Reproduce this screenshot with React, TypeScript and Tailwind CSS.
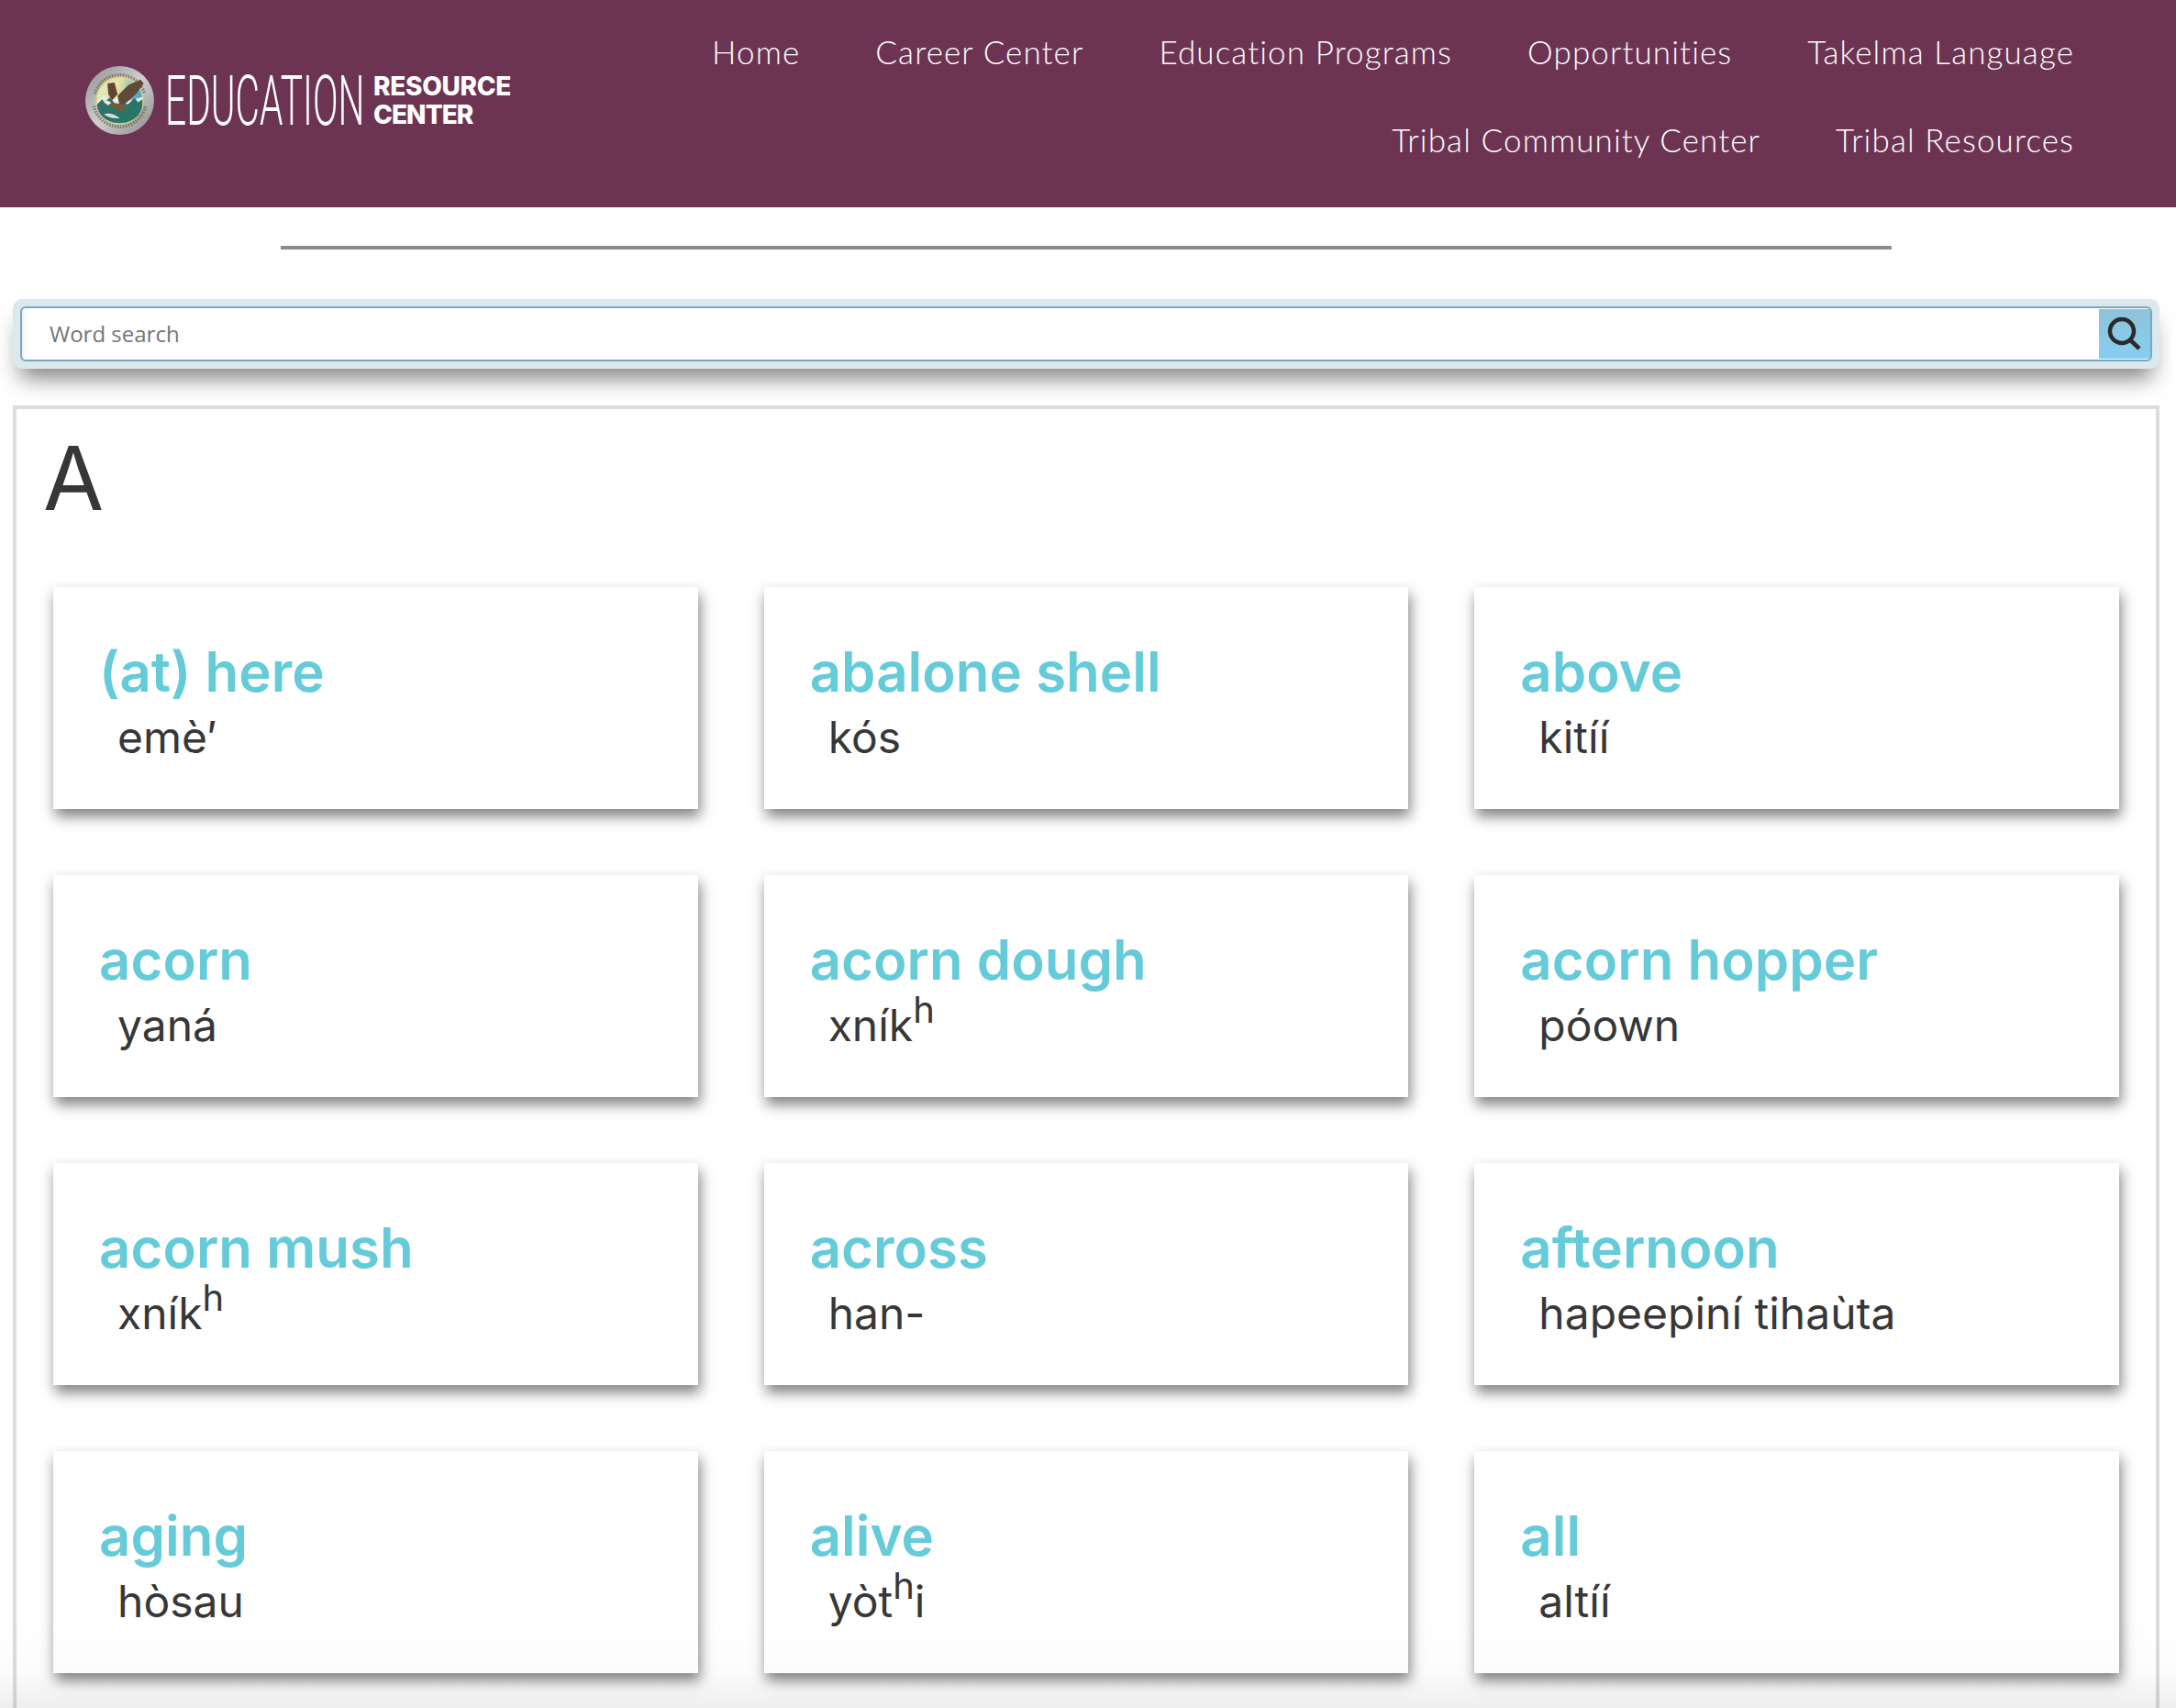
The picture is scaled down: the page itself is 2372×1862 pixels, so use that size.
import React from 'react';

const navItems = [
  'Home',
  'Career Center',
  'Education Programs',
  'Opportunities',
  'Takelma Language',
  'Tribal Community Center',
  'Tribal Resources',
];

type Word = { title: string; word: React.ReactNode };

const words: Word[] = [
  { title: '(at) here', word: 'emè′' },
  { title: 'abalone shell', word: 'kós' },
  { title: 'above', word: 'kitíí' },
  { title: 'acorn', word: 'yaná' },
  { title: 'acorn dough', word: <>xník<sup>h</sup></> },
  { title: 'acorn hopper', word: 'póown' },
  { title: 'acorn mush', word: <>xník<sup>h</sup></> },
  { title: 'across', word: 'han-' },
  { title: 'afternoon', word: 'hapeepiní tihaùta' },
  { title: 'aging', word: 'hòsau' },
  { title: 'alive', word: <>yòt<sup>h</sup>i</> },
  { title: 'all', word: 'altíí' },
];

const Seal = () => (
  <svg width="75" height="75" viewBox="0 0 224 224" className="shrink-0">
    <defs>
      <linearGradient id="ring" x1="0" y1="0" x2="1" y2="1">
        <stop offset="0" stopColor="#8f8f8f" />
        <stop offset="0.5" stopColor="#cfcfcf" />
        <stop offset="1" stopColor="#8a8a8a" />
      </linearGradient>
      <linearGradient id="sky" x1="0" y1="0" x2="1" y2="0.3">
        <stop offset="0" stopColor="#e4e8c8" />
        <stop offset="0.5" stopColor="#e6e2a0" />
        <stop offset="1" stopColor="#3f9fd8" />
      </linearGradient>
    </defs>
    <circle cx="112" cy="112" r="112" fill="url(#ring)" />
    {/* lettering of the ring, too small to read at this size */}
    <path d="M32 90 A83 83 0 0 1 192 90" fill="none" stroke="#5f5a40" strokeWidth="11" strokeDasharray="5 4" opacity="0.65" />
    <path d="M28 130 A86 86 0 0 0 196 130" fill="none" stroke="#5f5a40" strokeWidth="11" strokeDasharray="5 4" opacity="0.65" />
    <circle cx="112" cy="112" r="76" fill="url(#sky)" stroke="#d9d08a" strokeWidth="5" />
    <path d="M38 118 L60 96 L84 112 L112 92 L150 112 L186 100 L186 130 L38 130 Z" fill="#e8ece8" />
    <path d="M38 125 L55 108 L62 118 L80 102 L96 122 L140 124 L160 104 L172 118 L186 108 L186 125 C184 163 150 186 112 186 C74 186 40 163 38 125 Z" fill="#2a7468" />
    <path d="M72 57 L95 54 L105 92 L87 112 L75 92 Z" fill="#5f4632" />
    <path d="M105 97 L140 62 L180 44 L190 57 L165 92 L125 127 L110 122 Z" fill="#5f4a38" />
    <path d="M60 117 C68 110 78 112 85 118 L125 127 L130 150 L100 142 L84 128 L70 126 Z" fill="#7a5a3c" />
    <path d="M60 117 C68 110 78 112 84 120 L74 128 Z" fill="#f0efe8" />
    <path d="M60 157 C80 150 100 160 112 170 C95 172 75 168 60 157 Z" fill="#dcdedc" />
  </svg>
);

const Logo = () => (
  <div className="flex items-center">
    <Seal />
    <div className="w-[218px] ml-[12px] h-[56px] flex items-center">
      <span className="origin-left scale-x-[0.535] inline-block whitespace-nowrap font-['Roboto',sans-serif] font-light text-[76px] leading-none text-white">
        EDUCATION
      </span>
    </div>
    <div className="ml-[9px] flex flex-col font-['Inter',sans-serif] font-extrabold text-[28px] leading-[31px] text-white tracking-[-0.3px]">
      <span>RESOURCE</span>
      <span className="tracking-[-0.9px]">CENTER</span>
    </div>
  </div>
);

const WordCard = ({ title, word }: Word) => (
  <div className="h-[242px] bg-white pt-[56px] pl-[50px] shadow-[2px_8px_14px_rgba(0,0,0,0.5)]">
    <h3 className="font-['Inter',sans-serif] font-semibold text-[60px] leading-[72px] text-[#66cbd9]">{title}</h3>
    <p className="pl-[20px] pt-[6px] font-['Inter',sans-serif] text-[48px] leading-[60px] text-[#373737] [&_sup]:text-[40px]">{word}</p>
  </div>
);

export default function App() {
  return (
    <div className="relative h-[1862px] overflow-hidden bg-white">
      <header className="flex justify-between h-[226px] bg-[#6c3452] pl-[93px] pr-[111px] pt-[8px]">
        <div className="pt-[64px]">
          <Logo />
        </div>
        <nav className="flex flex-wrap content-start justify-end w-[1560px] gap-x-[82px] font-['Lato',sans-serif] font-light text-[35px] tracking-[1.1px] text-white">
          {navItems.map((item) => (
            <a key={item} className="h-[96px] flex items-center whitespace-nowrap">
              {item}
            </a>
          ))}
        </nav>
      </header>

      <div className="ml-[306px] mt-[42px] w-[1756px] h-[4px] bg-[#8c8c8c]" />

      <div className="ml-[14px] mr-[18px] mt-[54px] h-[76px] p-[8px] rounded-[10px] bg-[#dce8ed] shadow-[0_18px_24px_-8px_rgba(0,0,0,0.5)]">
        <div className="flex h-full rounded-[6px] border-2 border-[#76a9c0] bg-white overflow-hidden">
          <input
            placeholder="Word search"
            className="flex-1 pl-[30px] outline-none font-['Open_Sans',sans-serif] text-[24px] placeholder:text-[#757575] shadow-[inset_6px_0_6px_-6px_rgba(0,0,0,0.15)]"
          />
          <button className="flex items-center justify-center w-[56px] my-[1px] bg-gradient-to-b from-[#8fc3da] to-[#87cdf0]">
            <svg width="40" height="40" viewBox="0 0 40 40" fill="none" stroke="#2b2b2b" strokeWidth="4.5">
              <circle cx="17" cy="17" r="13" />
              <path d="M26.5 27 L36 36" />
            </svg>
          </button>
        </div>
      </div>

      <main className="ml-[14px] mr-[18px] mt-[40px] border-4 border-b-0 border-[#dcdbe0] px-[40px] pt-[20px] pb-[100px]">
        <h1 className="-ml-[11px] font-['Inter',sans-serif] text-[96px] leading-[110px] text-[#373737]">A</h1>
        <div className="grid grid-cols-3 gap-[72px] mt-[64px]">
          {words.map((w) => (
            <WordCard key={w.title} title={w.title} word={w.word} />
          ))}
        </div>
      </main>

      {/* fade at the bottom of the window */}
      <div className="absolute left-0 right-0 bottom-0 h-[100px] bg-[linear-gradient(to_bottom,rgba(0,0,0,0)_0%,rgba(0,0,0,0.012)_60%,rgba(0,0,0,0.065)_100%)]" />
    </div>
  );
}
